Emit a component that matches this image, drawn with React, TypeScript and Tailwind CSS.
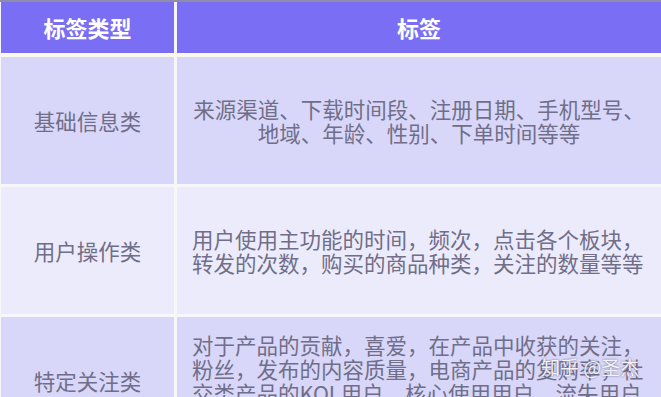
const font = "font-['Noto_Sans_CJK_SC','Noto_Sans',sans-serif]";

const rows = [
  {
    type: '基础信息类',
    bg: 'bg-[#d8d7f9]',
    align: 'text-center',
    lines: ['来源渠道、下载时间段、注册日期、手机型号、', '地域、年龄、性别、下单时间等等'],
  },
  {
    type: '用户操作类',
    bg: 'bg-[#ecebfc]',
    align: 'text-left',
    lines: ['用户使用主功能的时间，频次，点击各个板块，', '转发的次数，购买的商品种类，关注的数量等等'],
  },
  {
    type: '特定关注类',
    bg: 'bg-[#d8d7f9]',
    align: 'text-left',
    lines: [
      '对于产品的贡献，喜爱，在产品中收获的关注，',
      '粉丝，发布的内容质量，电商产品的复购率，社',
      '交类产品的KOL用户，核心使用用户，流失用户',
      '等等',
    ],
  },
];

export default function App() {
  return (
    <div className={`w-[661px] h-[397px] overflow-hidden bg-[#f6f6fb] ${font}`}>
      <div className="border-t-2 border-[#8f8caa] pl-[1px]">
        {/* header */}
        <div className="grid grid-cols-[173px_1fr] gap-x-[3px] h-[51px] text-white text-[22px] font-bold">
          <div className="bg-[#7a6ef5] flex items-center justify-center">标签类型</div>
          <div className="bg-[#7a6ef5] flex items-center justify-center">标签</div>
        </div>
        <div className="h-[4px] bg-[#fbf8ef]" />
        <div className="flex flex-col gap-y-[3px]">
          {rows.map((r, i) => (
            <div key={i} className="relative grid grid-cols-[173px_1fr] gap-x-[3px] h-[127px] text-[#706e88] text-[21.5px] leading-[24px]">
              <div className={`${r.bg} flex items-center justify-center`}>{r.type}</div>
              <div className={`${r.bg} flex items-center px-[15px] ${r.align === 'text-center' ? 'justify-center' : 'justify-start'}`}>
                <div className={`${r.align} whitespace-nowrap`}>
                  {r.lines.map((l, j) => (
                    <div key={j}>{l}</div>
                  ))}
                </div>
              </div>
              {i === 2 && (
                <div className="absolute left-[540px] top-[38px] text-[19px] text-white/90 [text-shadow:0_0_2px_rgba(70,70,100,0.9)]">
                  知乎 @圣杰
                </div>
              )}
            </div>
          ))}
        </div>
      </div>
    </div>
  );
}
